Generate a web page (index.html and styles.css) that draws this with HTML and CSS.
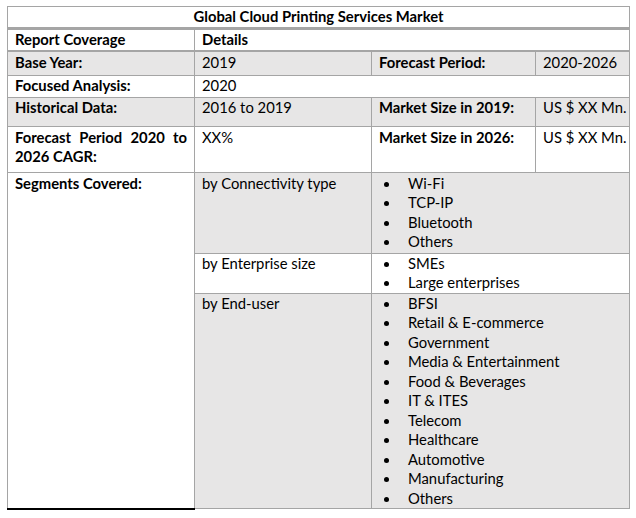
FILE: index.html
```html
<!DOCTYPE html>
<html>
<head>
<meta charset="utf-8">
<link rel="stylesheet" href="styles.css">
</head>
<body>
<table class="report">
  <colgroup>
    <col class="c1"><col class="c2"><col class="c3"><col class="c4">
  </colgroup>
  <tr class="title-row"><td colspan="4" class="title">Global Cloud Printing Services Market</td></tr>
  <tr class="head-row"><td class="b">Report Coverage</td><td colspan="3" class="b">Details</td></tr>
  <tr class="gray r-base"><td class="b">Base Year:</td><td>2019</td><td class="b">Forecast Period:</td><td class="nw">2020-2026</td></tr>
  <tr class="r-focus"><td class="b">Focused Analysis:</td><td colspan="3">2020</td></tr>
  <tr class="gray r-hist"><td class="b">Historical Data:</td><td>2016 to 2019</td><td class="b">Market Size in 2019:</td><td class="nw">US $ XX Mn.</td></tr>
  <tr class="r-fc"><td class="b just">Forecast Period 2020 to 2026 CAGR:</td><td>XX%</td><td class="b">Market Size in 2026:</td><td class="nw">US $ XX Mn.</td></tr>
  <tr class="gray r-seg">
    <td rowspan="3" class="b white bottom">Segments Covered:</td>
    <td>by Connectivity type</td>
    <td colspan="2"><ul><li>Wi-Fi</li><li>TCP-IP</li><li>Bluetooth</li><li>Others</li></ul></td>
  </tr>
  <tr class="r-ent">
    <td>by Enterprise size</td>
    <td colspan="2"><ul><li>SMEs</li><li>Large enterprises</li></ul></td>
  </tr>
  <tr class="gray r-end">
    <td>by End-user</td>
    <td colspan="2"><ul><li>BFSI</li><li>Retail &amp; E-commerce</li><li>Government</li><li>Media &amp; Entertainment</li><li>Food &amp; Beverages</li><li>IT &amp; ITES</li><li>Telecom</li><li>Healthcare</li><li>Automotive</li><li>Manufacturing</li><li>Others</li></ul></td>
  </tr>
</table>
</body>
</html>
```

FILE: styles.css
```css
html, body {
  margin: 0;
  padding: 0;
  background: #ffffff;
}
body {
  padding: 6px 0 0 7px;
  font-family: Lato, "Open Sans", sans-serif;
  font-size: 14.8px;
  color: #000000;
}
.report {
  border-collapse: collapse;
  table-layout: fixed;
  width: 622px;
}
.c1 { width: 187px; }
.c2 { width: 177px; }
.c3 { width: 164px; }
.c4 { width: 94px; }
.report td {
  border: 1px solid #a5a5a5;
  padding: 0 7px;
  vertical-align: top;
  line-height: 19.5px;
}
.report td.nw {
  white-space: nowrap;
  padding-right: 0;
  overflow: hidden;
}
.b { font-weight: 700; }
.gray td { background: #e7e6e6; }
.gray td.white { background: #ffffff; }
.title {
  text-align: center;
  font-weight: 700;
  height: 20px;
  line-height: 20px;
}
.title-row td { border-bottom: 3px solid #a5a5a5; }
.head-row td { height: 19px; border-bottom: 2px solid #a5a5a5; }
.r-base td { height: 22px; padding-top: 1px; }
.r-focus td { height: 21px; padding-top: 0; }
.r-hist td { height: 28px; padding-top: 0; }
.r-fc td { height: 44px; padding-top: 1px; }
.just { text-align: justify; text-align-last: left; }
.r-seg td { height: 79px; padding-top: 1px; }
.r-ent td { height: 39px; padding-top: 0; }
.r-end td { padding-top: 0; padding-bottom: 0; }
td.bottom { border-bottom: 2px solid #000000; }
ul {
  margin: 0;
  padding: 0;
  list-style: none;
}
li {
  position: relative;
  padding-left: 29px;
}
li::before {
  content: "";
  position: absolute;
  left: 5px;
  top: 8px;
  width: 5px;
  height: 5px;
  border-radius: 50%;
  background: #000000;
}
```
